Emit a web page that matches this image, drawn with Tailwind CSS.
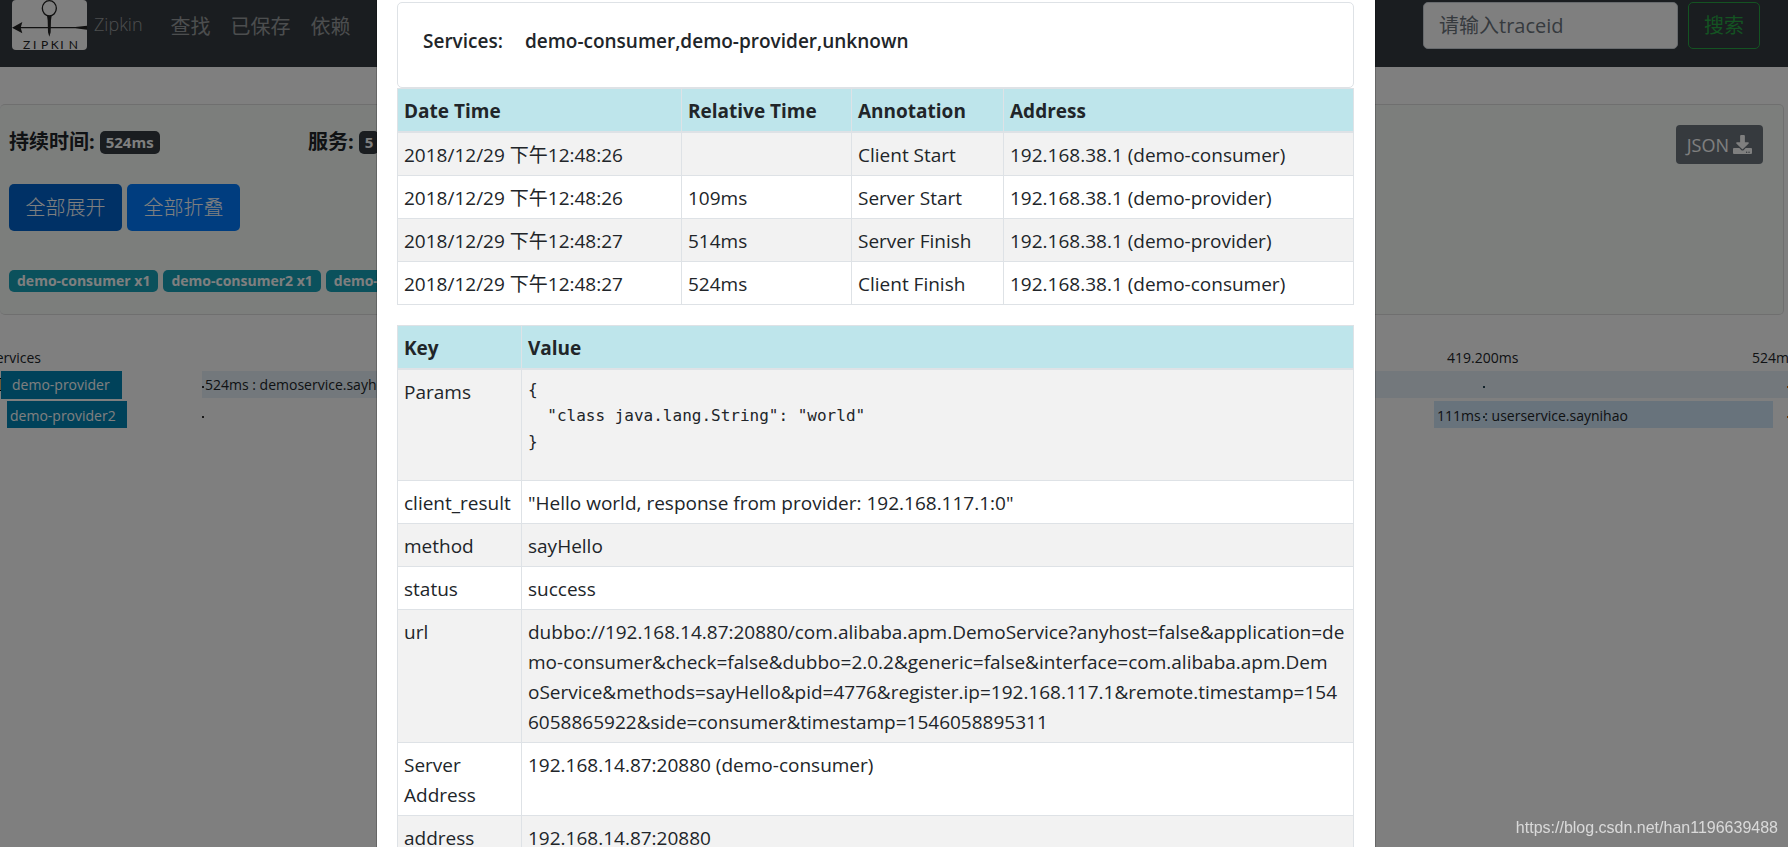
<!DOCTYPE html>
<html lang="zh-CN">
<head>
<meta charset="utf-8">
<meta name="viewport" content="width=device-width, initial-scale=1">
<title>Zipkin</title>
<script src="https://cdn.jsdelivr.net/npm/@tailwindcss/browser@4"></script>
</head>
<body class="h-screen overflow-hidden bg-white font-['Open_Sans','Noto_Sans_CJK_SC',sans-serif] text-[19px] leading-[30px] text-[#212529]">

<!-- Page behind the dialog -->
<nav class="flex h-[67px] items-start bg-[#343a40] pr-7 pl-3 text-white/50">
  <a href="#" class="flex items-start gap-[7px]">
    <svg class="h-[50px] w-[75px] rounded" viewBox="0 0 225 150" role="img" aria-label="Zipkin logo">
      <rect width="225" height="150" fill="#fff"/>
      <ellipse cx="112" cy="25" rx="21" ry="23" fill="none" stroke="#222" stroke-width="4"/>
      <path d="M105 47h14l-2 14-1 36-4 13-4-13-1-36z" fill="#222"/>
      <path d="M20 81h170l35-4v12l-35-4H20z" fill="#222"/>
      <path d="M0 83l31-17-5 17 5 17z" fill="#222"/>
      <text x="33 63 87 116 145 170" y="148" font-family="Lato" font-size="36" fill="#222">ZIPKIN</text>
    </svg>
    <span class="pt-[9px] text-[18px] font-light">Zipkin</span>
  </a>
  <div class="flex gap-5 pt-3 pl-7 text-[20px]">
    <a href="#">查找</a><a href="#">已保存</a><a href="#">依赖</a>
  </div>
  <form class="ml-auto flex gap-[10px] pt-[2px]">
    <input type="text" aria-label="traceid" placeholder="请输入traceid" class="h-[47px] w-[255px] rounded-[5px] border border-[#ced4da] bg-white px-[15px] text-[20px] placeholder:text-[#6c757d]">
    <button type="button" class="h-[47px] rounded-[5px] border border-[#28a745] px-[15px] text-[20px] text-[#28a745]">搜索</button>
  </form>
</nav>

<main class="pt-[37px]">
  <section class="mr-1 h-[211px] rounded-[5px] border border-l-0 border-[#dfdfdf] bg-[#f8fcf9] pl-[9px]">
    <div class="flex items-start pt-5 pr-5">
      <h2 class="flex w-[299px] items-center gap-[5px] pt-[2px] text-[20px] font-bold">持续时间: <span class="rounded-[5px] bg-[#343a40] px-[6px] text-[15px] leading-[23px] text-white">524ms</span></h2>
      <h2 class="flex items-center gap-[5px] pt-[2px] text-[20px] font-bold">服务: <span class="rounded-[5px] bg-[#343a40] px-[6px] text-[15px] leading-[23px] text-white">5</span></h2>
      <button type="button" class="ml-auto flex h-[39px] items-center gap-1 rounded bg-[#6c757d] px-[11px] text-[18px] text-white">JSON
        <svg class="h-[19px] w-[19px]" viewBox="0 0 512 512" fill="currentColor" aria-hidden="true"><path d="M216 0h80c13 0 24 11 24 24v168h88c18 0 27 21 14 34L270 378c-7 7-20 7-28 0L90 226c-12-13-3-34 15-34h87V24c0-13 11-24 24-24zm296 376v112c0 13-11 24-24 24H24c-13 0-24-11-24-24V376c0-13 11-24 24-24h147l49 49c20 20 52 20 72 0l49-49h147c13 0 24 11 24 24zM388 464a20 20 0 1 0-40 0 20 20 0 0 0 40 0zm64 0a20 20 0 1 0-40 0 20 20 0 0 0 40 0z"/></svg>
      </button>
    </div>
    <div class="flex gap-[5px] pt-5 text-[20px] font-light text-white">
      <button type="button" class="h-[47px] w-[113px] rounded-[5px] bg-[#0062cc]">全部展开</button>
      <button type="button" class="h-[47px] w-[113px] rounded-[5px] bg-[#007bff]">全部折叠</button>
    </div>
    <div class="flex gap-[5px] pt-[39px] text-[14px] leading-[22px] font-bold text-white">
      <span class="rounded-[5px] bg-[#17a2b8] px-2">demo-consumer x1</span>
      <span class="rounded-[5px] bg-[#17a2b8] px-2">demo-consumer2 x1</span>
      <span class="rounded-[5px] bg-[#17a2b8] px-2">demo-provider x1</span>
    </div>
  </section>

  <!-- Trace timeline -->
  <section class="mt-8 overflow-hidden text-[14px] leading-[22px]">
    <div class="flex h-6 whitespace-nowrap">
      <div class="flex w-[202px] shrink-0"><span class="-ml-3">Services</span></div>
      <div class="flex flex-1 justify-end"><span class="w-[305px] shrink-0">419.200ms</span><span class="w-9 shrink-0">524ms</span></div>
    </div>
    <div class="flex h-[30px]">
      <div class="flex w-[202px] shrink-0 items-start">
        <span class="mt-[7px] h-[13px] w-[2px] shrink-0 border-y border-r border-black bg-[#d8b070]"></span>
        <span class="-ml-px h-7 w-[121px] bg-[#0084b4] pl-[11px] leading-[28px] text-white">demo-provider</span>
      </div>
      <div class="relative h-[27px] flex-1 bg-[#e6f1f8] pl-[3px] leading-[28px]">524ms : demoservice.sayhello
        <span class="absolute top-[15px] left-0 h-[2px] w-[2px] bg-[#333]"></span>
        <span class="absolute top-[15px] right-[303px] h-[2px] w-[2px] bg-[#245]"></span>
        <span class="absolute top-[15px] right-0 h-[2px] w-px bg-[#c60]"></span>
      </div>
    </div>
    <div class="flex h-[30px]">
      <div class="w-[202px] shrink-0 pl-[7px]"><span class="block h-[27px] w-[120px] bg-[#0084b4] pl-[3px] leading-[30px] text-white">demo-provider2</span></div>
      <div class="relative flex flex-1 justify-end pr-[15px]">
        <div class="h-[27px] w-[339px] bg-[#d0e6f8] pl-[3px] leading-[30px]">111ms : userservice.saynihao</div>
        <span class="absolute top-[15px] left-0 h-[2px] w-[2px] bg-[#333]"></span>
        <span class="absolute top-[15px] right-[303px] h-[2px] w-[2px] bg-[#245]"></span>
        <span class="absolute top-[15px] right-0 h-[2px] w-px bg-[#c60]"></span>
      </div>
    </div>
  </section>
</main>

<!-- Span detail dialog -->
<div class="fixed inset-0 flex items-start justify-center overflow-hidden bg-black/50 pr-9">
  <div role="dialog" aria-label="Span" class="w-full max-w-[1000px] border-x border-black/20 bg-white bg-clip-padding pt-[2px] pr-[21px] pb-5 pl-5">
    <div class="h-[86px] rounded-[5px] border border-[#dee2e6] px-[25px] pt-[23px] font-semibold">
      <div class="flex gap-[22px]"><span>Services:</span><span>demo-consumer,demo-provider,unknown</span></div>
    </div>

    <table class="w-full table-fixed border-collapse text-left [&_td]:border [&_td]:border-[#dee2e6] [&_td]:px-[6px] [&_td]:pt-[7px] [&_td]:pb-[5px] [&_th]:border [&_th]:border-b-2 [&_th]:border-[#dee2e6] [&_th]:px-[6px] [&_th]:pt-[7px] [&_th]:pb-[5px]">
      <colgroup><col class="w-[284px]"><col class="w-[170px]"><col class="w-[152px]"><col></colgroup>
      <thead class="bg-[#bee5eb]"><tr><th>Date Time</th><th>Relative Time</th><th>Annotation</th><th>Address</th></tr></thead>
      <tbody>
        <tr class="bg-[#f2f2f2]"><td>2018/12/29 下午12:48:26</td><td></td><td>Client Start</td><td>192.168.38.1 (demo-consumer)</td></tr>
        <tr><td>2018/12/29 下午12:48:26</td><td>109ms</td><td>Server Start</td><td>192.168.38.1 (demo-provider)</td></tr>
        <tr class="bg-[#f2f2f2]"><td>2018/12/29 下午12:48:27</td><td>514ms</td><td>Server Finish</td><td>192.168.38.1 (demo-provider)</td></tr>
        <tr><td>2018/12/29 下午12:48:27</td><td>524ms</td><td>Client Finish</td><td>192.168.38.1 (demo-consumer)</td></tr>
      </tbody>
    </table>

    <table class="mt-5 w-full table-fixed border-collapse text-left [&_td]:border [&_td]:border-[#dee2e6] [&_td]:px-[6px] [&_td]:pt-[7px] [&_td]:pb-[5px] [&_td]:align-top [&_th]:border [&_th]:border-b-2 [&_th]:border-[#dee2e6] [&_th]:px-[6px] [&_th]:pt-[7px] [&_th]:pb-[5px]">
      <colgroup><col class="w-[124px]"><col></colgroup>
      <thead class="bg-[#bee5eb]"><tr><th>Key</th><th>Value</th></tr></thead>
      <tbody>
        <tr class="bg-[#f2f2f2]"><td>Params</td><td><pre class="mb-5 font-['DejaVu_Sans_Mono',monospace] text-[16px] leading-[26px]">{
  "class java.lang.String": "world"
}</pre></td></tr>
        <tr><td>client_result</td><td>"Hello world, response from provider: 192.168.117.1:0"</td></tr>
        <tr class="bg-[#f2f2f2]"><td>method</td><td>sayHello</td></tr>
        <tr><td>status</td><td>success</td></tr>
        <tr class="bg-[#f2f2f2]"><td>url</td><td class="whitespace-nowrap">dubbo://192.168.14.87:20880/com.alibaba.apm.DemoService?anyhost=false&amp;application=de<br>mo-consumer&amp;check=false&amp;dubbo=2.0.2&amp;generic=false&amp;interface=com.alibaba.apm.Dem<br>oService&amp;methods=sayHello&amp;pid=4776&amp;register.ip=192.168.117.1&amp;remote.timestamp=154<br>6058865922&amp;side=consumer&amp;timestamp=1546058895311</td></tr>
        <tr><td>Server Address</td><td>192.168.14.87:20880 (demo-consumer)</td></tr>
        <tr class="bg-[#f2f2f2]"><td>address</td><td>192.168.14.87:20880</td></tr>
      </tbody>
    </table>
  </div>
</div>

<div class="fixed right-[10px] bottom-2 font-['Liberation_Sans',sans-serif] text-[16px] leading-[22px] text-white/70">https://blog.csdn.net/han1196639488</div>
</body>
</html>
